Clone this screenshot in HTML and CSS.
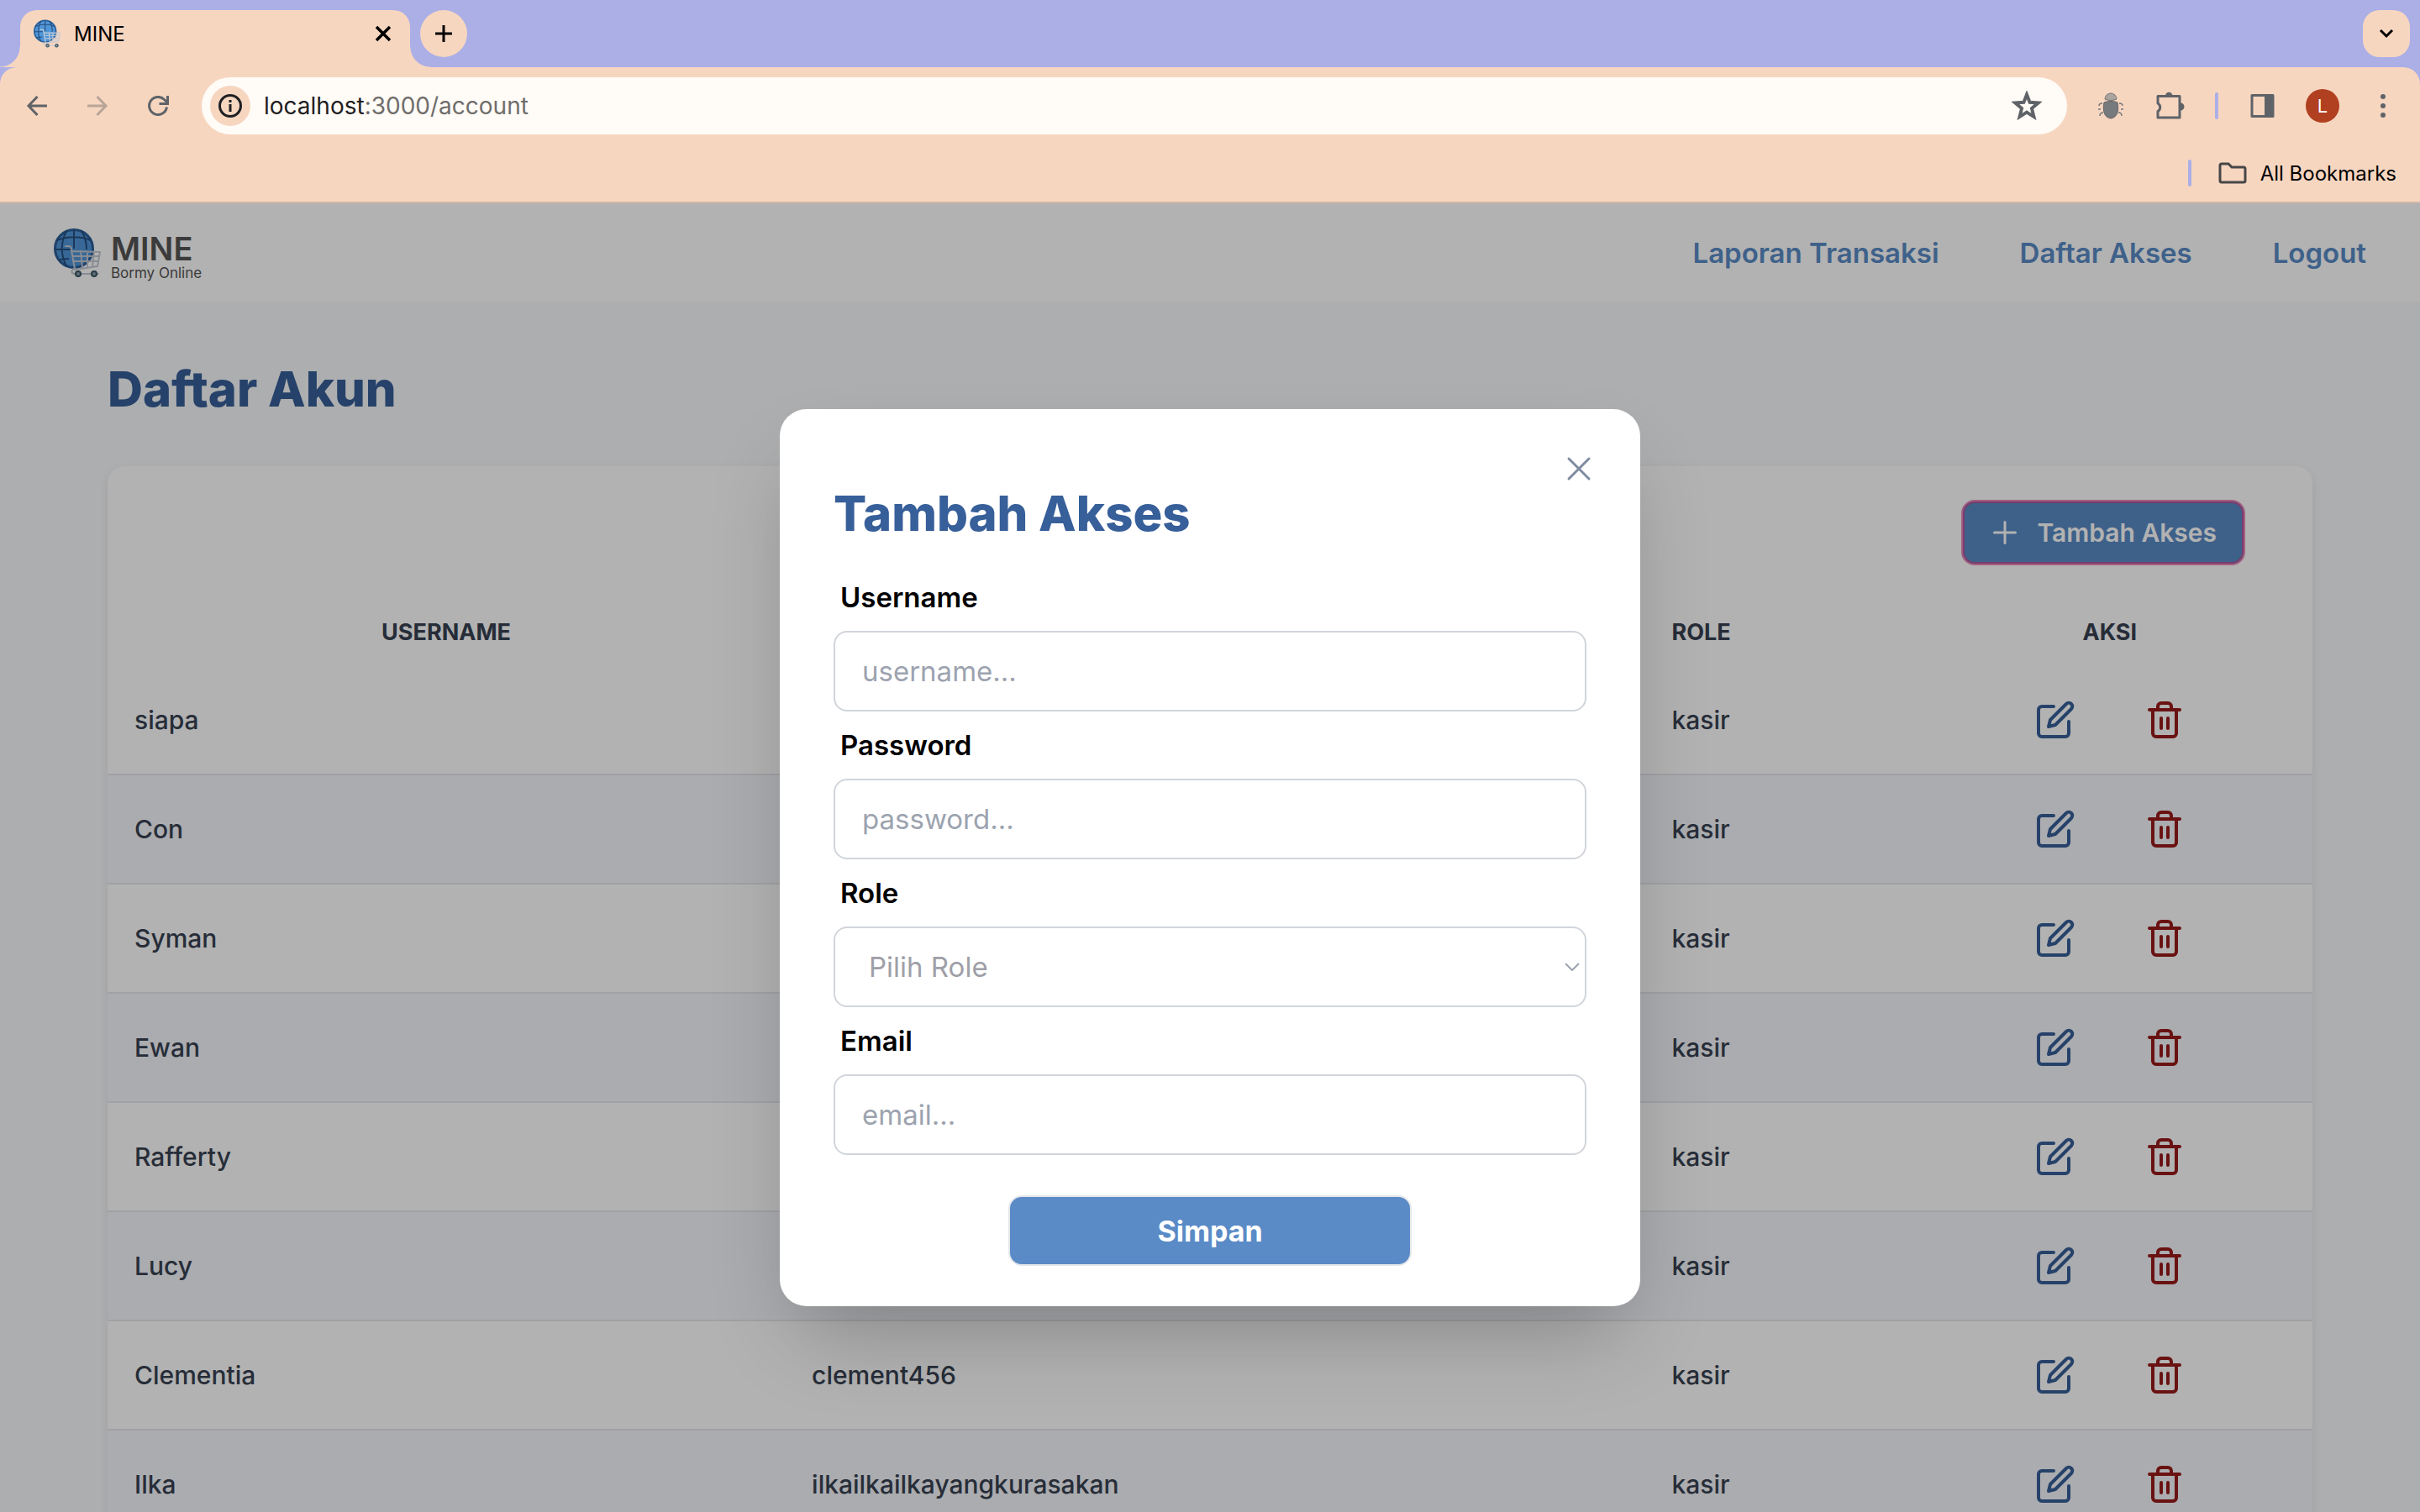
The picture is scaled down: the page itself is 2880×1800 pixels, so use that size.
FILE: index.html
```html
<!DOCTYPE html>
<html lang="id">
<head>
<meta charset="utf-8">
<title>MINE</title>
<link rel="stylesheet" href="styles.css">
</head>
<body>
<svg class="defs" aria-hidden="true">
  <symbol id="globe-cart" viewBox="0 0 56 58">
    <circle cx="24" cy="24" r="22.500" fill="#4f96d8" stroke="#2a5f9a" stroke-width="3"/>
    <path d="M24 2v22M4 14c12-5 28-5 40 0M15 3c-7 14-7 28 0 42M33 3c4 6 6 12 6 22M2 25h18M6 38c4-2 8-2 12-2" fill="none" stroke="#274f80" stroke-width="2"/>
    <path d="M14 21h4c3 0 3 3 3 5l4 22h-1c-4 2-3 6 1 6h28M21 27l34 1-3 17-27 4M22 33h32M23 39h30M32 27l2 20M40 28v18M48 28l-2 18" fill="none" stroke="#c3c9d3" stroke-width="2" stroke-linejoin="round" stroke-linecap="round"/>
    <circle cx="29" cy="54" r="3" fill="#8aa0ac" stroke="#3d5563" stroke-width="2"/>
    <circle cx="48" cy="54" r="3" fill="#8aa0ac" stroke="#3d5563" stroke-width="2"/>
  </symbol>
  <symbol id="edit" viewBox="0 0 24 24"><g fill="none" stroke="currentColor" stroke-width="2" stroke-linecap="round" stroke-linejoin="round"><path d="M11 4H4a2 2 0 0 0-2 2v14a2 2 0 0 0 2 2h14a2 2 0 0 0 2-2v-7"/><path d="M18.500 2.500a2.121 2.121 0 0 1 3 3L12 15l-4 1 1-4 9.500-9.500z"/></g></symbol>
  <symbol id="trash" viewBox="0 0 24 24"><path d="M3 6h18M19 6v14a2 2 0 0 1-2 2H7a2 2 0 0 1-2-2V6m3 0V4a2 2 0 0 1 2-2h4a2 2 0 0 1 2 2v2M10 11v6M14 11v6" fill="none" stroke="currentColor" stroke-width="2" stroke-linecap="round" stroke-linejoin="round"/></symbol>
</svg>

<header class="browser">
  <div class="tabstrip">
    <div class="tab">
      <svg class="tab-icon"><use href="#globe-cart"/></svg>
      <span class="tab-title">MINE</span>
      <button class="tab-close" aria-label="Close tab"><svg viewBox="0 0 20 20"><path d="M2 2l16 16M18 2L2 18" stroke="#000" stroke-width="3.500"/></svg></button>
    </div>
    <button class="new-tab" aria-label="New tab"><svg viewBox="0 0 20 20"><path d="M10 0v20M0 10h20" stroke="#000" stroke-width="3"/></svg></button>
    <button class="tab-search" aria-label="Search tabs"><svg viewBox="0 0 18 12"><path d="M2 2l7 7 7-7" fill="none" stroke="#000" stroke-width="3"/></svg></button>
  </div>
  <div class="toolbar">
    <button class="tool" aria-label="Back"><svg viewBox="0 0 24 24"><path d="M24 12H2M12.500 1L2 12l10.500 11" fill="none" stroke="#5f6368" stroke-width="3"/></svg></button>
    <button class="tool" aria-label="Forward"><svg viewBox="0 0 24 24"><path d="M0 12h22M11.500 1L22 12 11.500 23" fill="none" stroke="#b8a598" stroke-width="3"/></svg></button>
    <button class="tool" aria-label="Reload"><svg viewBox="0 0 26 24"><path d="M23.500 13.500A10.500 10.500 0 1 1 20.500 4.500L24 8M24.500 0v9.500H14.500" fill="none" stroke="#5f6368" stroke-width="3"/></svg></button>
    <div class="omnibox">
      <button class="site-info" aria-label="Site information"><svg viewBox="0 0 28 28"><circle cx="14" cy="14" r="12.500" fill="none" stroke="#1f2023" stroke-width="3"/><path d="M14 12v9M14 7v3" stroke="#1f2023" stroke-width="3"/></svg></button>
      <span class="url">localhost<span class="url-rest">:3000/account</span></span>
      <button class="star" aria-label="Bookmark"><svg viewBox="0 0 32 32"><path d="M16 4l3.200 8.300 9 .6-6.900 5.800 2.200 8.900L16 22.800l-7.500 4.800 2.200-8.900-6.900-5.800 9-.6z" fill="none" stroke="#5f6368" stroke-width="3.500"/></svg></button>
    </div>
    <div class="actions">
      <button aria-label="Bug extension"><svg viewBox="0 0 32 32"><path d="M6 13c-3 0-4 1-4 3M4 20H1M7 24c-3 0-4 1-4 4M26 13c3 0 4 1 4 3M28 20h3M25 24c3 0 4 1 4 4" fill="none" stroke="#777" stroke-width="1.500"/><path d="M9 8a7 7 0 0 1 14 0c-3 2-11 2-14 0z" fill="#a9a49f" stroke="#777"/><path d="M8 12c4-2 12-2 16 0 2 9 0 18-8 19-8-1-10-10-8-19z" fill="#777a7c" stroke="#666"/></svg></button>
      <button class="puzzle" aria-label="Extensions"><svg viewBox="0 0 36 36"><path d="M4 6.500h26v25.500H4v-7.500a5.500 5.500 0 0 0 0-9.500z" fill="none" stroke="#5f6368" stroke-width="3" stroke-linejoin="round"/><path d="M13 6a4.200 4.200 0 0 1 8.400 0zM31 14.500a4.400 4.400 0 0 1 0 9z" fill="#5f6368"/></svg></button>
      <span class="bar"></span>
      <button aria-label="Side panel"><svg viewBox="0 0 32 32"><path d="M4 3.500h25v25H4z" fill="none" stroke="#5f6368" stroke-width="3" stroke-linejoin="round"/><path d="M19 4h10v24H19z" fill="#5f6368"/></svg></button>
      <button class="avatar" aria-label="Profile">L</button>
      <button aria-label="Menu"><svg viewBox="0 0 32 32"><g fill="#5f6368"><circle cx="16" cy="5" r="3"/><circle cx="16" cy="16" r="3"/><circle cx="16" cy="27" r="3"/></g></svg></button>
    </div>
  </div>
  <div class="bookmarks">
    <span class="bar"></span>
    <button class="all-bookmarks"><svg viewBox="0 0 34 26"><path d="M2 4q0-2 2-2h8l4 4h14q2 0 2 2v14q0 2-2 2H4q-2 0-2-2z" fill="none" stroke="#474747" stroke-width="3"/></svg>All Bookmarks</button>
  </div>
</header>

<div class="page">
  <nav class="navbar">
    <a class="brand" href="#"><svg class="brand-icon"><use href="#globe-cart"/></svg><span class="brand-text"><b>MINE</b><small>Bormy Online</small></span></a>
    <div class="links"><a href="#">Laporan Transaksi</a><a href="#">Daftar Akses</a><a href="#">Logout</a></div>
  </nav>
  <main class="content">
    <h1>Daftar Akun</h1>
    <section class="card">
      <div class="card-top"><button class="add"><svg viewBox="0 0 28 28"><path d="M14 1.500v25M1.500 14h25" stroke="currentColor" stroke-width="3" stroke-linecap="round"/></svg>Tambah Akses</button></div>
      <table>
        <colgroup><col class="c-user"><col class="c-mail"><col class="c-role"><col class="c-act"></colgroup>
        <thead><tr><th>USERNAME</th><th></th><th class="left">ROLE</th><th>AKSI</th></tr></thead>
        <tbody>
          <tr><td>siapa</td><td></td><td>kasir</td><td><div class="acts"><button class="edit" aria-label="Edit"><svg><use href="#edit"/></svg></button><button class="del" aria-label="Hapus"><svg><use href="#trash"/></svg></button></div></td></tr>
          <tr><td>Con</td><td></td><td>kasir</td><td><div class="acts"><button class="edit" aria-label="Edit"><svg><use href="#edit"/></svg></button><button class="del" aria-label="Hapus"><svg><use href="#trash"/></svg></button></div></td></tr>
          <tr><td>Syman</td><td></td><td>kasir</td><td><div class="acts"><button class="edit" aria-label="Edit"><svg><use href="#edit"/></svg></button><button class="del" aria-label="Hapus"><svg><use href="#trash"/></svg></button></div></td></tr>
          <tr><td>Ewan</td><td></td><td>kasir</td><td><div class="acts"><button class="edit" aria-label="Edit"><svg><use href="#edit"/></svg></button><button class="del" aria-label="Hapus"><svg><use href="#trash"/></svg></button></div></td></tr>
          <tr><td>Rafferty</td><td></td><td>kasir</td><td><div class="acts"><button class="edit" aria-label="Edit"><svg><use href="#edit"/></svg></button><button class="del" aria-label="Hapus"><svg><use href="#trash"/></svg></button></div></td></tr>
          <tr><td>Lucy</td><td></td><td>kasir</td><td><div class="acts"><button class="edit" aria-label="Edit"><svg><use href="#edit"/></svg></button><button class="del" aria-label="Hapus"><svg><use href="#trash"/></svg></button></div></td></tr>
          <tr><td>Clementia</td><td>clement456</td><td>kasir</td><td><div class="acts"><button class="edit" aria-label="Edit"><svg><use href="#edit"/></svg></button><button class="del" aria-label="Hapus"><svg><use href="#trash"/></svg></button></div></td></tr>
          <tr><td>Ilka</td><td>ilkailkailkayangkurasakan</td><td>kasir</td><td><div class="acts"><button class="edit" aria-label="Edit"><svg><use href="#edit"/></svg></button><button class="del" aria-label="Hapus"><svg><use href="#trash"/></svg></button></div></td></tr>
        </tbody>
      </table>
    </section>
  </main>

  <div class="overlay">
    <form class="modal" role="dialog" aria-labelledby="modal-title">
      <button type="button" class="close" aria-label="Tutup"><svg viewBox="0 0 30 30"><path d="M3 3l24 24M27 3L3 27" stroke="currentColor" stroke-width="3" stroke-linecap="round"/></svg></button>
      <h2 id="modal-title">Tambah Akses</h2>
      <label for="username">Username</label>
      <input id="username" type="text" placeholder="username...">
      <label for="password">Password</label>
      <input id="password" type="password" placeholder="password...">
      <label for="role">Role</label>
      <div class="select"><select id="role"><option>Pilih Role</option></select><svg viewBox="0 0 18 10"><path d="M1 1l8 8 8-8" fill="none" stroke="currentColor" stroke-width="2"/></svg></div>
      <label for="email">Email</label>
      <input id="email" type="email" placeholder="email...">
      <button class="save">Simpan</button>
    </form>
  </div>
</div>
</body>
</html>
```
FILE: styles.css
```css
* { box-sizing: border-box; }
body {
  margin: 0;
  height: 100vh;
  display: flex;
  flex-direction: column;
  overflow: hidden;
  font-family: Inter, "Liberation Sans", sans-serif;
}
button, input, select { font: inherit; }
button { border: 0; padding: 0; background: none; cursor: pointer; display: flex; align-items: center; justify-content: center; }
a { text-decoration: none; }
svg { display: block; }
.defs { position: absolute; width: 0; height: 0; }

/* Browser window */
.browser { background: #abafe6; border-bottom: 2px solid #cfb6a6; flex: none; }
.tabstrip { height: 80px; padding: 12px 12px 0 24px; display: flex; align-items: flex-start; gap: 12px; }
.tab {
  position: relative;
  width: 464px; height: 68px; padding: 0 22px 12px 16px;
  display: flex; align-items: center;
  background: #f7d6c0; border-radius: 20px 20px 0 0;
}
.tab::before, .tab::after { content: ""; position: absolute; bottom: 0; width: 24px; height: 24px; }
.tab::before { left: -24px; background: radial-gradient(circle at 0 0, transparent 23px, #f7d6c0 24px); }
.tab::after { right: -24px; background: radial-gradient(circle at 100% 0, transparent 23px, #f7d6c0 24px); }
.tab-icon { width: 32px; height: 34px; }
.tab-title { margin-left: 16px; font-size: 24px; flex: 1; }
.tab-close svg { width: 20px; height: 20px; }
.new-tab, .tab-search { height: 56px; width: 56px; border-radius: 28px; background: #f7d6c0; }
.new-tab svg { width: 20px; height: 20px; }
.tab-search { margin-left: auto; border-radius: 20px; }
.tab-search svg { width: 18px; height: 12px; }
.toolbar { height: 92px; padding: 12px 28px 12px 32px; display: flex; align-items: center; background: #f7d6c0; border-radius: 20px 20px 0 0; }
.tool { width: 24px; margin-right: 48px; }
.tool svg { width: 26px; height: 24px; flex: none; }
.omnibox { flex: 1; height: 68px; margin-right: 36px; margin-left: -8px; border-radius: 34px; background: #fffbf6; display: flex; align-items: center; padding: 0 30px 0 10px; }
.site-info { width: 48px; height: 48px; border-radius: 24px; background: #f7d6c0; }
.site-info svg { width: 28px; height: 28px; }
.url { flex: 1; margin-left: 16px; font-size: 28px; color: #1f2023; }
.url-rest { color: #6f6d6b; }
.star svg { width: 36px; height: 36px; }
.actions { display: flex; align-items: center; gap: 36px; }
.actions svg { width: 32px; height: 32px; }
.actions .puzzle svg { width: 36px; height: 36px; }
.bar { width: 4px; height: 32px; border-radius: 2px; background: #abafe6; }
.avatar { width: 40px; height: 40px; border-radius: 20px; background: #b04020; color: #fff; font-size: 22px; }
.bookmarks { height: 68px; padding: 0 28px 0 0; display: flex; align-items: center; justify-content: flex-end; gap: 32px; background: #f7d6c0; }
.all-bookmarks { gap: 16px; font-size: 24px; }
.all-bookmarks svg { width: 34px; height: 28px; }

/* Page */
.page { position: relative; flex: 1; min-height: 0; overflow: hidden; background: #f8f9fb; }
.navbar { height: 117px; padding: 0 64px; display: flex; align-items: center; justify-content: space-between; background: #fff; }
.brand { display: flex; align-items: center; gap: 12px; color: #555; }
.brand-icon { width: 56px; height: 58px; }
.brand-text { display: flex; flex-direction: column; padding-top: 10px; }
.brand-text b { font-size: 38px; line-height: 38px; font-weight: 600; }
.brand-text small { font-size: 17px; line-height: 20px; }
.links { display: flex; gap: 96px; font-size: 33px; font-weight: 600; }
.links a { color: #5a8bc6; }
.content { padding: 64px 128px; }
h1, h2 { margin: 0; color: #375f99; font-size: 58px; line-height: 80px; font-weight: 800; }
.card { margin-top: 52px; background: #fff; border-radius: 20px; box-shadow: 0 4px 12px rgba(0, 0, 0, .08); }
.card-top { padding: 40px 80px 39px; display: flex; justify-content: flex-end; }
.add { height: 78px; padding: 0 32px 0 36px; gap: 24px; border-radius: 16px; border: 2px solid #e788bc; box-shadow: inset 0 0 0 2px #ae579a; background: #5a8bc6; color: #fff; font-size: 30px; font-weight: 600; }
.add svg { width: 28px; height: 28px; }
table { width: 100%; table-layout: fixed; border-collapse: collapse; color: #374151; font-size: 30px; font-weight: 500; }
.c-user { width: 30.720%; }
.c-mail { width: 39%; }
.c-role { width: 11.900%; }
th { height: 80px; padding: 0 32px; font-size: 27px; font-weight: 700; }
td { height: 130px; padding: 0 32px; border-bottom: 2px solid #e5e7eb; }
.left { text-align: left; }
tbody tr:nth-child(even) { background: #f5f6fb; }
.acts { display: flex; justify-content: center; gap: 82px; }
.acts svg { width: 48px; height: 48px; }
.edit { color: #375f99; }
.del { color: #991b1b; }

/* Dialog */
.overlay { position: absolute; inset: 0; display: flex; align-items: center; justify-content: center; background: rgba(0, 0, 0, .3); }
.modal {
  position: relative;
  width: 1024px; padding: 84px 64px 48px;
  display: flex; flex-direction: column;
  border-radius: 32px; background: #fff;
  box-shadow: 0 50px 100px -24px rgba(0, 0, 0, .25);
}
.close { position: absolute; top: 56px; right: 58px; color: #7f8ba0; }
.close svg { width: 30px; height: 30px; }
.modal h2 { margin-bottom: 20px; }
label { padding-left: 8px; font-size: 33px; line-height: 80px; font-weight: 600; }
input, select { width: 100%; height: 96px; padding: 0 32px; border: 2px solid #d1d5db; border-radius: 16px; background: #fff; font-size: 33px; color: #9ca3af; }
input::placeholder { color: #9ca3af; }
.select { position: relative; color: #9ca3af; }
select { appearance: none; padding: 0 40px; color: #9f9fa8; }
.select svg { position: absolute; right: 8px; top: 43px; width: 18px; height: 10px; }
.save { align-self: center; width: 480px; height: 84px; margin-top: 48px; border: 2px solid #e5e7eb; border-radius: 16px; background: #5a8bc6; color: #fff; font-size: 34px; font-weight: 700; }
```
